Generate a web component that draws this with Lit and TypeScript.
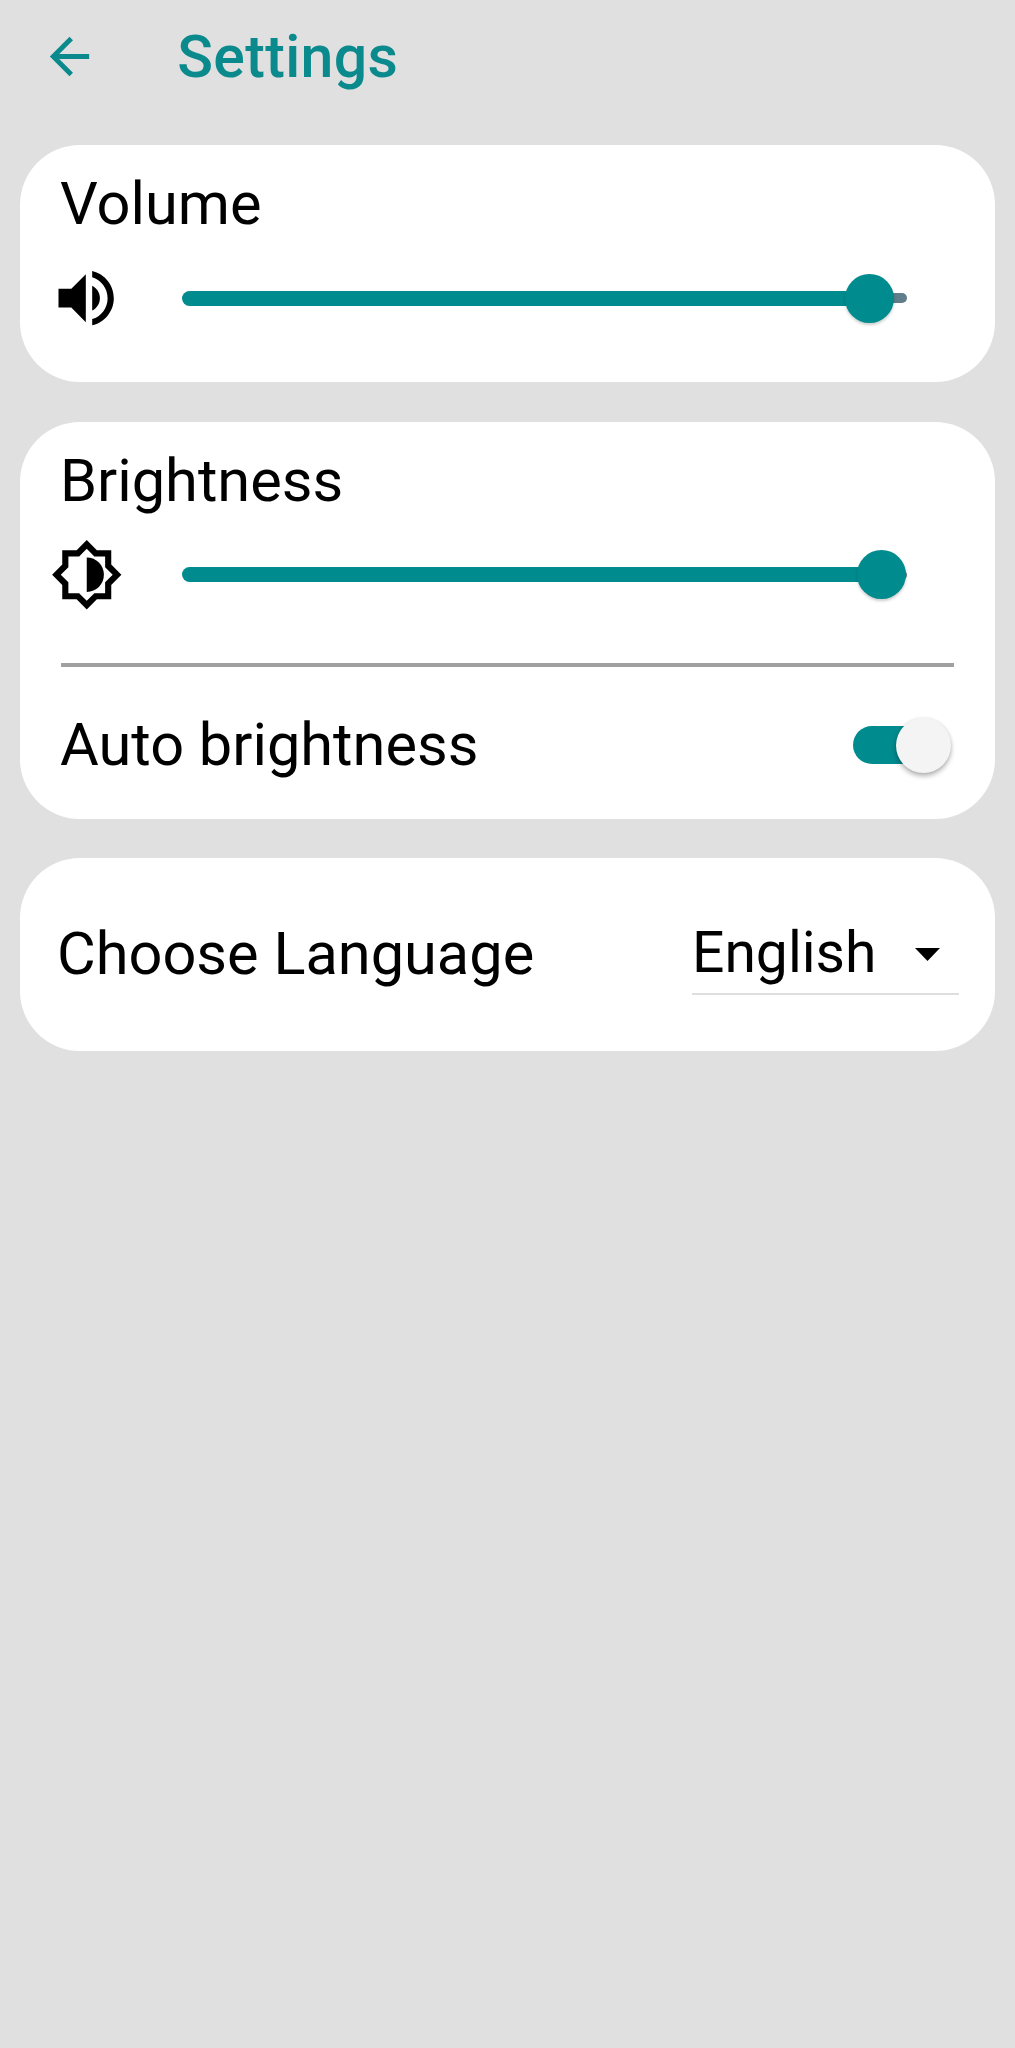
import { LitElement, html, css, svg } from "lit";
import { customElement, property } from "lit/decorators.js";

const backIcon = svg`<path d="M20 11H7.83l5.59-5.59L12 4l-8 8 8 8 1.41-1.41L7.83 13H20v-2z"/>`;
const brightnessIcon = svg`<path fill-rule="evenodd" d="M20 8.69V4h-4.69L12 .69 8.69 4H4v4.69L.69 12 4 15.31V20h4.69L12 23.31 15.31 20H20v-4.69L23.31 12 20 8.69zM18 14.48V18h-3.52L12 20.48 9.52 18H6v-3.52L3.52 12 6 9.52V6h3.52L12 3.52 14.48 6H18v3.52L20.48 12 18 14.48z"/><path d="M12 6.4v11.2c3.1 0 5.6-2.5 5.6-5.6S15.1 6.4 12 6.4z"/>`;

@customElement("settings-slider")
class SettingsSlider extends LitElement {
  @property({ type: Number }) value = 100;

  static styles = css`
    :host { display: block; width: 724.5px; height: 50px; }
    .rail { position: relative; height: 50px; display: flex; align-items: center; }
    .rest { flex: 1; height: 10px; border-radius: 0 5px 5px 0; background: #607d8b; }
    .active { height: 15px; border-radius: 8px 0 0 8px; background: #008b8e; }
    .thumb {
      position: absolute; top: 0.5px; width: 49px; height: 49px; margin-left: -24.5px;
      border-radius: 50%; background: #008b8e; box-shadow: 0 2px 3px rgba(0, 0, 0, 0.2);
    }
  `;

  render() {
    return html`<div class="rail">
      <div class="active" style="width:${this.value}%"></div>
      <div class="rest"></div>
      <div class="thumb" style="left:${this.value}%"></div>
    </div>`;
  }
}

@customElement("app-root")
class AppRoot extends LitElement {
  static styles = css`
    :host {
      display: block; min-height: 2048px; background: #e0e0e0; color: #000;
      font-family: Roboto, "Liberation Sans", sans-serif; font-size: 59.5px; line-height: 70px;
    }
    * { box-sizing: border-box; }
    svg { display: block; flex: none; fill: currentColor; }
    .bar { height: 145px; padding: 0 0 32px 39.7px; display: flex; align-items: center; color: #0a8a8c; }
    .back { width: 59px; height: 59px; }
    .title { margin: 0 0 0 78.5px; font-size: 59px; font-weight: 500; line-height: 70px; letter-spacing: 0.35px; }
    .cards { display: flex; flex-direction: column; gap: 39.5px; padding: 0 20px; }
    .card { background: #fff; border-radius: 60px; }
    .volume { height: 237px; padding: 24px 41px 0 40px; }
    .brightness { height: 397.4px; padding: 24px 41px 0 40px; }
    .language { height: 192.3px; padding: 0 36.5px 1px 37px; display: flex; align-items: center; justify-content: space-between; }
    .control { display: flex; align-items: center; height: 74px; margin-top: 22.3px; }
    .icon { width: 73.5px; height: 73.5px; margin: 0 58.5px 0 -10px; }
    .divider { height: 4px; margin: 51px 0 0 1px; background: #a0a0a0; }
    .row { display: flex; align-items: center; justify-content: space-between; margin-top: 43px; }
    .switch { position: relative; width: 91px; height: 38.5px; margin-right: 10px; border-radius: 20px; background: #008b8e; }
    .knob {
      position: absolute; right: -7px; top: -8px; width: 55px; height: 55px; border-radius: 50%;
      background: #f4f4f4; box-shadow: 0 3px 5px rgba(0, 0, 0, 0.3), 0 0 3px rgba(0, 0, 0, 0.08);
    }
    .select {
      display: flex; align-items: center; justify-content: space-between; width: 266.5px; height: 82px;
      padding-right: 18.5px; border-bottom: 2px solid #dedede; font-size: 57px;
    }
    .caret { width: 25px; height: 13px; margin-top: 3px; }
  `;

  render() {
    return html`
      <header class="bar">
        <svg class="back" viewBox="0 0 24 24">${backIcon}</svg>
        <h1 class="title">Settings</h1>
      </header>
      <main class="cards">
        <section class="card volume">
          <div>Volume</div>
          <div class="control">
            <svg class="icon" viewBox="0 0.7 73.5 73.5">
              <path d="M8.5 27.5H21.3L35.8 13v48L21.3 46.3H8.5z"/>
              <path d="M42.2 24.5C46.7 26.9 49.9 31.4 49.9 36.9S46.7 46.9 42.2 49.3z"/>
              <path d="M42.2 9.8C54.5 12.7 63.8 23.7 63.8 36.9S54.5 61.1 42.2 64V57.8C51.1 55.1 57.6 46.8 57.6 36.9S51.1 18.7 42.2 16z"/>
            </svg>
            <settings-slider .value=${94.9}></settings-slider>
          </div>
        </section>
        <section class="card brightness">
          <div>Brightness</div>
          <div class="control">
            <svg class="icon" viewBox="0 0 24 24">${brightnessIcon}</svg>
            <settings-slider .value=${96.5}></settings-slider>
          </div>
          <div class="divider"></div>
          <div class="row">
            <span>Auto brightness</span>
            <div class="switch"><div class="knob"></div></div>
          </div>
        </section>
        <section class="card language">
          <span>Choose Language</span>
          <div class="select">
            <span>English</span>
            <svg class="caret" viewBox="0 0 25 13"><path d="M0 0h25L12.5 13z"/></svg>
          </div>
        </section>
      </main>
    `;
  }
}
